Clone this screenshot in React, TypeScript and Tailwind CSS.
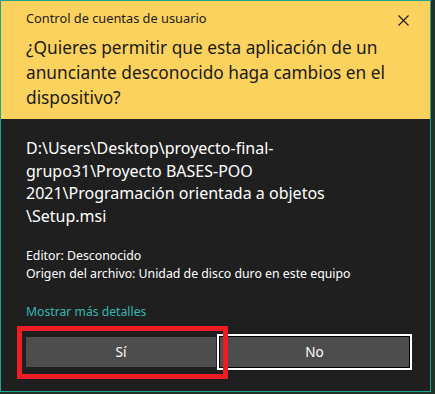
import React from "react";

export default function App() {
  return (
    <div className="w-[435px] h-[394px] bg-[#22302a] overflow-hidden" style={{ fontFamily: "'Noto Sans', sans-serif" }}>
      <div className="w-[431px] h-[392px] border border-[#21a394] bg-[#1f1f1f] flex flex-col">
        <div className="h-[118px] bg-[#fcd25f] pl-[25px] pr-[16px] text-[#1a1a1a] shrink-0">
          <div className="flex items-start justify-between pt-[9px]">
            <div className="text-[12.8px] leading-[16px]">Control de cuentas de usuario</div>
            <svg width="11" height="11" viewBox="0 0 11 11" className="mt-[5px] mr-[5px]">
              <path d="M0.5 0.5 L10.5 10.5 M10.5 0.5 L0.5 10.5" stroke="#1a1a1a" strokeWidth="1.1" />
            </svg>
          </div>
          <div className="mt-[9px] text-[17.3px] leading-[25px] pr-[10px]">
            ¿Quieres permitir que esta aplicación de un anunciante desconocido haga cambios en el dispositivo?
          </div>
        </div>
        <div className="flex-1 pl-[25px] pr-[18px] text-white flex flex-col">
          <div className="pt-[18px] text-[16px] leading-[22.5px]">
            <div>D:\Users\Desktop\proyecto-final-</div>
            <div>grupo31\Proyecto BASES-POO</div>
            <div>2021\Programación orientada a objetos</div>
            <div>\Setup.msi</div>
          </div>
          <div className="mt-[20px] text-[12.3px] leading-[18px]">
            <div>Editor: Desconocido</div>
            <div>Origen del archivo: Unidad de disco duro en este equipo</div>
          </div>
          <div className="mt-[20px] text-[12.2px] leading-[18px] text-[#35b8b2]">Mostrar más detalles</div>
          <div className="mt-[16px] flex gap-[4px] relative">
            <div className="w-[190px] h-[30px] bg-[#4d4d4d] flex items-center justify-center text-[13.5px]">Sí</div>
            <div className="w-[189px] h-[30px] bg-[#4d4d4d] flex items-center justify-center text-[13.5px] shadow-[0_0_0_1px_#000,0_0_0_3px_#fff]">No</div>
            <div className="absolute left-[-9px] top-[-11px] w-[211px] h-[53px] border-[5px] border-[#ee1c25]" />
          </div>
        </div>
      </div>
    </div>
  );
}
